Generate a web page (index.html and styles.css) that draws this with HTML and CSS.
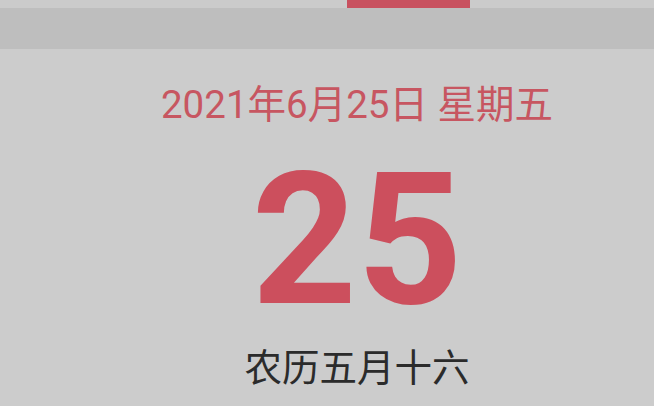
FILE: index.html
```html
<!DOCTYPE html>
<html lang="zh-CN">
<head>
<meta charset="utf-8">
<link rel="stylesheet" href="styles.css">
</head>
<body>
<div class="tabs"><div class="indicator"></div></div>
<div class="band"></div>
<main class="day">
  <div class="date">2021年6月25日 星期五</div>
  <div class="num">25</div>
  <div class="lunar">农历五月十六</div>
</main>
</body>
</html>
```
FILE: styles.css
```css
html, body {
  margin: 0;
  padding: 0;
  background: #cccccc;
  width: 654px;
  height: 406px;
  overflow: hidden;
  font-family: Roboto, "Noto Sans CJK SC", sans-serif;
}
.tabs {
  height: 8px;
  background: #cbcbcb;
  display: flex;
}
.indicator {
  margin-left: 347px;
  width: 123px;
  height: 8px;
  background: #c8515f;
}
.band {
  height: 41px;
  background: #bebebe;
}
.day {
  display: flex;
  flex-direction: column;
  align-items: center;
  padding-left: 60px;
}
.date {
  margin-top: 31px;
  font-size: 38.5px;
  line-height: 50px;
  color: #c75661;
  white-space: nowrap;
}
.num {
  margin-top: 18px;
  font-size: 184px;
  line-height: 184px;
  font-weight: 700;
  color: #cc4f5d;
}
.lunar {
  margin-top: 14px;
  font-family: "Noto Sans CJK SC", sans-serif;
  font-size: 37.5px;
  line-height: 1;
  color: #2b2b2b;
  white-space: nowrap;
}
```
